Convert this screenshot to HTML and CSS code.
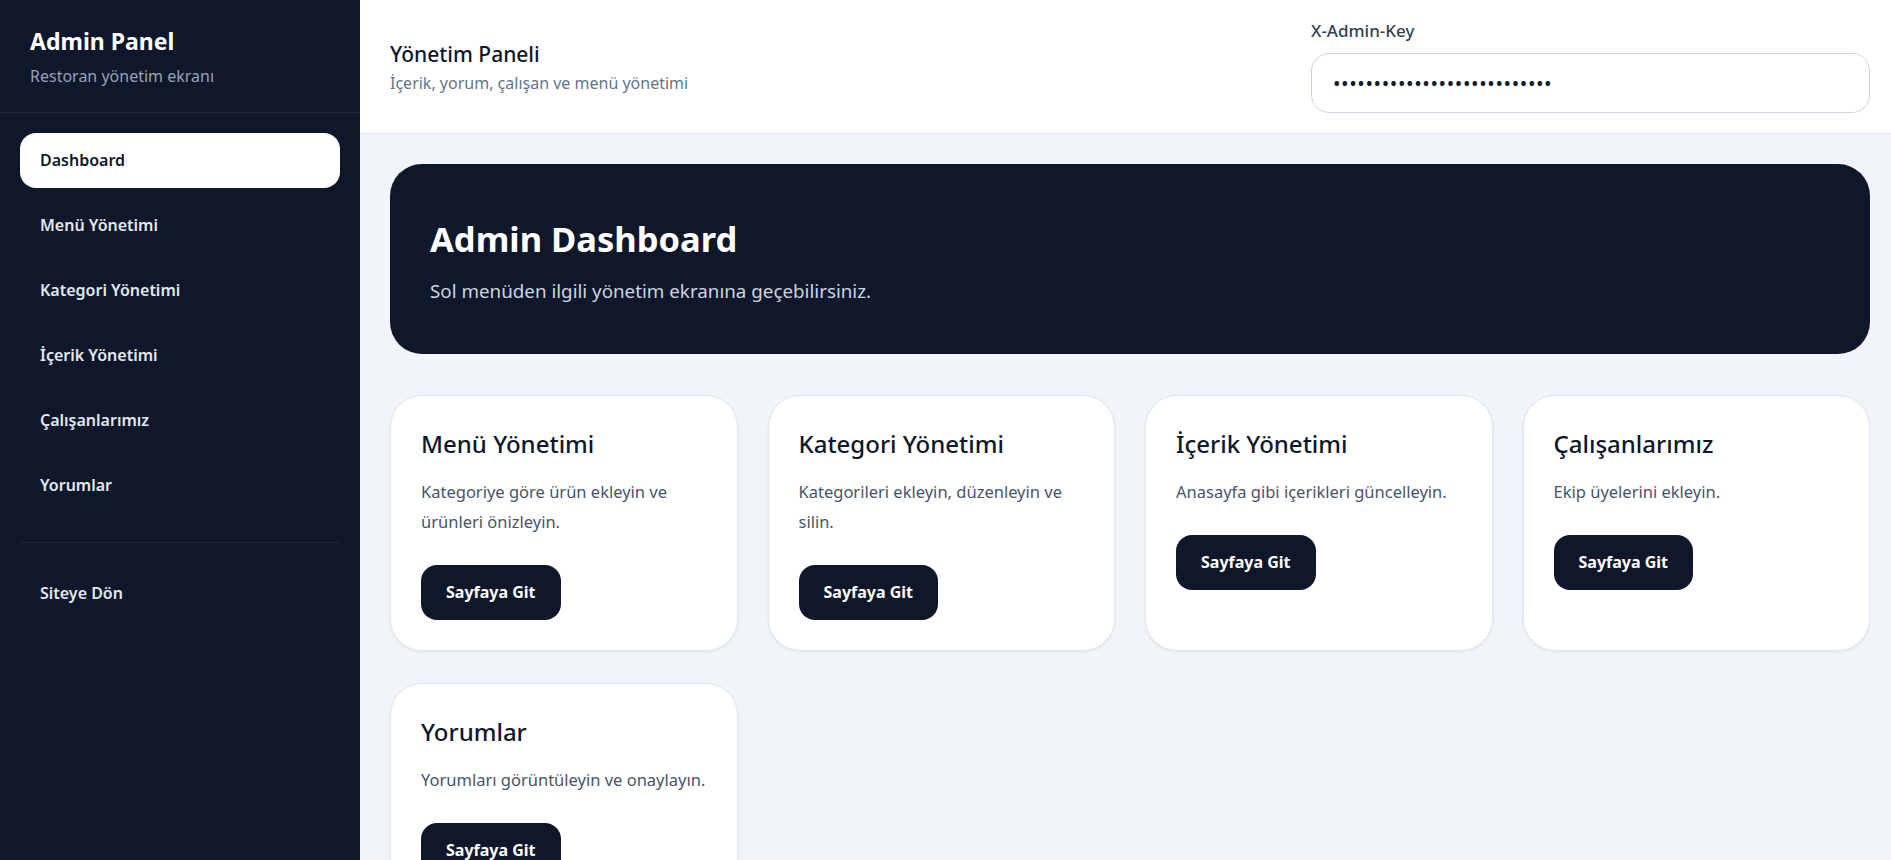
FILE: index.html
```html
<!DOCTYPE html>
<html lang="tr">
<head>
  <meta charset="UTF-8">
  <meta name="viewport" content="width=device-width, initial-scale=1.0">
  <title>Admin Panel</title>
  <link rel="stylesheet" href="styles.css">
</head>
<body>
  <aside class="sidebar">
    <div class="brand">
      <h1>Admin Panel</h1>
      <p>Restoran yönetim ekranı</p>
    </div>
    <nav class="side-nav">
      <a href="#" class="active">Dashboard</a>
      <a href="#menu">Menü Yönetimi</a>
      <a href="#kategori">Kategori Yönetimi</a>
      <a href="#icerik">İçerik Yönetimi</a>
      <a href="#calisanlar">Çalışanlarımız</a>
      <a href="#yorumlar">Yorumlar</a>
      <hr>
      <a href="#site">Siteye Dön</a>
    </nav>
  </aside>

  <div class="main">
    <header class="topbar">
      <div class="topbar-title">
        <h2>Yönetim Paneli</h2>
        <p>İçerik, yorum, çalışan ve menü yönetimi</p>
      </div>
      <div class="key-box">
        <label for="admin-key">X-Admin-Key</label>
        <input id="admin-key" type="password" value="abcdefghijklmnopqrstuvwxyz0">
      </div>
    </header>

    <main class="content">
      <section class="hero">
        <h2>Admin Dashboard</h2>
        <p>Sol menüden ilgili yönetim ekranına geçebilirsiniz.</p>
      </section>

      <div class="card-grid">
        <div class="card">
          <h3>Menü Yönetimi</h3>
          <p>Kategoriye göre ürün ekleyin ve ürünleri önizleyin.</p>
          <a href="#menu" class="btn">Sayfaya Git</a>
        </div>
        <div class="card">
          <h3>Kategori Yönetimi</h3>
          <p>Kategorileri ekleyin, düzenleyin ve silin.</p>
          <a href="#kategori" class="btn">Sayfaya Git</a>
        </div>
        <div class="card">
          <h3>İçerik Yönetimi</h3>
          <p>Anasayfa gibi içerikleri güncelleyin.</p>
          <a href="#icerik" class="btn">Sayfaya Git</a>
        </div>
        <div class="card">
          <h3>Çalışanlarımız</h3>
          <p>Ekip üyelerini ekleyin.</p>
          <a href="#calisanlar" class="btn">Sayfaya Git</a>
        </div>
        <div class="card">
          <h3>Yorumlar</h3>
          <p>Yorumları görüntüleyin ve onaylayın.</p>
          <a href="#yorumlar" class="btn">Sayfaya Git</a>
        </div>
      </div>
    </main>
  </div>
</body>
</html>
```

FILE: styles.css
```css
* { box-sizing: border-box; }
body { margin: 0; display: flex; min-height: 100vh; font-family: 'Noto Sans', 'Open Sans', sans-serif; background: #f1f5f9; color: #0f172a; }

/* sidebar */
.sidebar { width: 360px; flex-shrink: 0; background: #0f172a; color: #fff; }
.brand { padding: 26px 30px 25px; border-bottom: 1px solid #1e293b; }
.brand h1 { margin: 0; font-size: 23px; line-height: 30px; font-weight: 700; }
.brand p { margin: 9px 0 0; font-size: 16px; line-height: 22px; color: #94a3b8; }
.side-nav { display: flex; flex-direction: column; gap: 10px; padding: 20px; }
.side-nav a { display: block; height: 55px; padding: 0 20px; line-height: 55px; border-radius: 16px; color: #e2e8f0; font-size: 16px; font-weight: 600; text-decoration: none; }
.side-nav a.active { background: #fff; color: #0f172a; }
.side-nav hr { margin: 19px 0 13px; border: none; border-top: 1px solid #1e293b; }

/* header */
.main { flex: 1; min-width: 0; }
.topbar { display: flex; justify-content: space-between; align-items: center; padding: 20px 21px 20px 30px; background: #fff; border-bottom: 1px solid #e2e8f0; }
.topbar-title h2 { margin: 0; font-size: 21px; line-height: 28px; font-weight: 500; }
.topbar-title p { margin: 4px 0 0; font-size: 16px; line-height: 22px; color: #64748b; }
.key-box { width: 559px; }
.key-box label { display: block; font-size: 17px; line-height: 22px; font-weight: 500; color: #334155; }
.key-box input { display: block; width: 100%; height: 60px; margin-top: 11px; padding: 0 21px; border: 1px solid #cbd5e1; border-radius: 18px; font-family: inherit; font-size: 20px; letter-spacing: 0.6px; color: #0f172a; outline: none; }

/* content */
.content { padding: 30px 21px 30px 30px; }
.hero { height: 190px; padding: 51px 40px 0; background: #0f172a; color: #fff; border-radius: 32px; margin-bottom: 41px; }
.hero h2 { margin: 0; font-size: 34.5px; line-height: 48px; font-weight: 700; }
.hero p { margin: 14px 0 0; font-size: 18.8px; line-height: 28px; color: #cbd5e1; }
.card-grid { display: grid; grid-template-columns: repeat(4, 1fr); gap: 32px 30px; }
.card { padding: 30px; background: #fff; border: 1px solid #e2e8f0; border-radius: 32px; box-shadow: 0 1px 3px rgba(15,23,42,0.08); }
.card h3 { margin: 0; font-size: 24px; line-height: 36px; font-weight: 500; }
.card p { margin: 15px 0 28px; font-size: 16.5px; line-height: 30px; color: #475569; }
.btn { display: inline-block; height: 55px; padding: 0 25px; line-height: 55px; border-radius: 16px; background: #0f172a; color: #fff; font-size: 16px; font-weight: 700; text-decoration: none; }
```
